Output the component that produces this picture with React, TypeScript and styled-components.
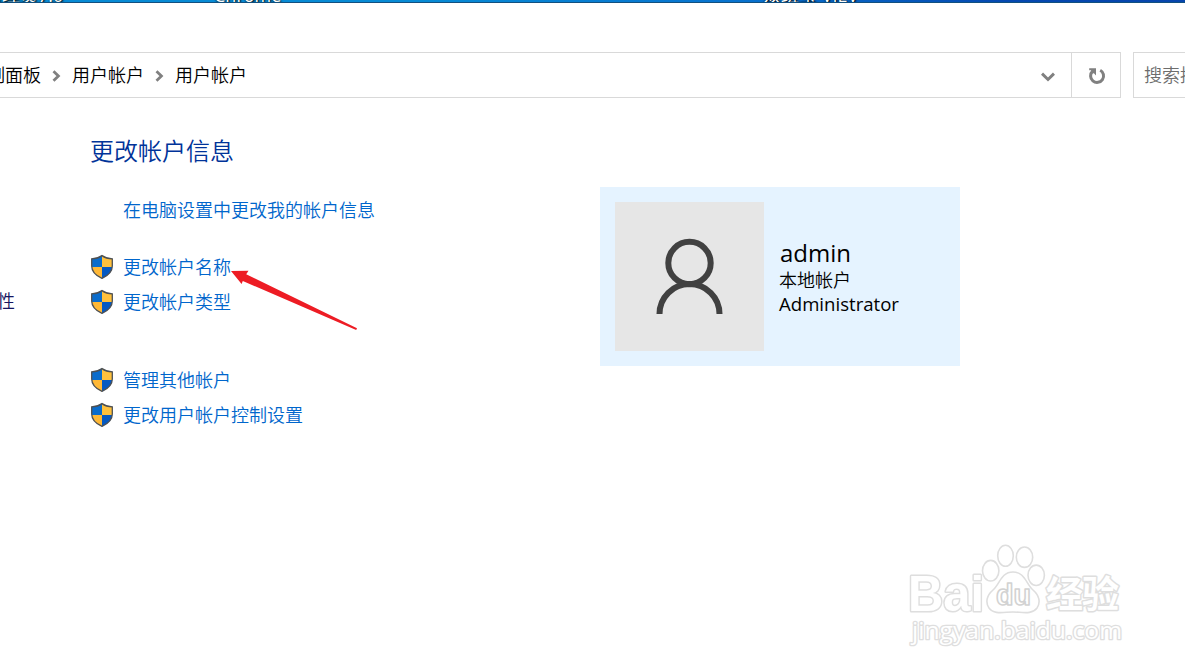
import React from 'react';
import styled, { createGlobalStyle } from 'styled-components';

interface Task {
  label: string;
  shield?: boolean;
}

const crumbs = ['控制面板', '用户帐户', '用户帐户'];

const accountTasks: Task[] = [
  { label: '更改帐户名称', shield: true },
  { label: '更改帐户类型', shield: true }
];

const adminTasks: Task[] = [
  { label: '管理其他帐户', shield: true },
  { label: '更改用户帐户控制设置', shield: true }
];

const ShieldIcon: React.FC = () => (
  <svg width="24" height="26" viewBox="0 0 24 26">
    <defs>
      <clipPath id="shield">
        <path d="M12 1.6C9.2 3.6 5.4 4.7 1.7 4.8v7.1c0 5.6 4.3 9.7 10.3 12.4 6-2.7 10.3-6.8 10.3-12.4V4.8C18.6 4.7 14.8 3.6 12 1.6z" />
      </clipPath>
    </defs>
    <g clipPath="url(#shield)">
      <path d="M0 0h12v13H0z" fill="#0a6ccc" />
      <path d="M12 0h12v13H12z" fill="#ffc13d" />
      <path d="M0 13h12v13H0z" fill="#ffb836" />
      <path d="M12 13h12v13H12z" fill="#0559c2" />
    </g>
    <path
      d="M12 1.6C9.2 3.6 5.4 4.7 1.7 4.8v7.1c0 5.6 4.3 9.7 10.3 12.4 6-2.7 10.3-6.8 10.3-12.4V4.8C18.6 4.7 14.8 3.6 12 1.6z"
      fill="none"
      stroke="#4d5053"
      strokeWidth="1.3"
    />
  </svg>
);

const CrumbChevron: React.FC = () => (
  <svg width="9" height="12" viewBox="0 0 9 12">
    <path d="M1.5 1.3L6.4 6l-4.9 4.7" fill="none" stroke="#808080" strokeWidth="2.8" />
  </svg>
);

const DropChevron: React.FC = () => (
  <svg width="14" height="10" viewBox="0 0 14 10">
    <path d="M1 1.7l6 5.8 6-5.8" fill="none" stroke="#808080" strokeWidth="3" />
  </svg>
);

const RefreshIcon: React.FC = () => (
  <svg width="18" height="18" viewBox="0 0 18 18">
    <path d="M12.2 3.2A6.5 6.5 0 1 1 4.6 4.2" fill="none" stroke="#808080" strokeWidth="3" />
    <path d="M1.2 1.2H8v7.2L5.9 6.2 4 6.6 3 3.2H1.2z" fill="#808080" />
  </svg>
);

const UserIcon: React.FC = () => (
  <svg width="149" height="149" viewBox="0 0 149 149" fill="none" stroke="#414141" strokeWidth="6">
    <circle cx="74.5" cy="61" r="21.2" />
    <path d="M44.5 112a30 30 0 0 1 60 0" />
  </svg>
);

const WatermarkLogo: React.FC = () => (
  <svg width="230" height="114" viewBox="0 0 230 114">
    <g fill="#fff" stroke="#dedede" strokeWidth="1.6" strokeLinejoin="round">
      <text
        x="7"
        y="71"
        fontSize="50"
        fontWeight="bold"
        fontFamily="'Liberation Sans', Arial, sans-serif"
        textLength="76"
        lengthAdjust="spacingAndGlyphs"
        strokeWidth="3"
        paintOrder="stroke"
      >
        Bai
      </text>
      <ellipse cx="89.7" cy="30.7" rx="8.2" ry="10.3" />
      <ellipse cx="104.5" cy="15.8" rx="7.8" ry="10.5" />
      <ellipse cx="123.5" cy="17.2" rx="8.2" ry="10.2" />
      <ellipse cx="135.2" cy="35.3" rx="8.2" ry="10.2" />
      <path d="M112 32c-12 0-13 12-20 18-6 5-8 12-4 18 5 7 15 4 24 4s19 3 24-4c4-6 2-13-4-18-7-6-8-18-20-18z" />
      <text
        x="95"
        y="65"
        fontSize="29"
        fontWeight="bold"
        fontFamily="'Liberation Sans', Arial, sans-serif"
        textLength="35"
        lengthAdjust="spacingAndGlyphs"
        stroke="#d2d2d2"
      >
        du
      </text>
      <text
        x="145"
        y="68"
        fontSize="37"
        fontWeight="bold"
        fontFamily="'Noto Sans CJK SC', sans-serif"
        textLength="73"
        strokeWidth="3"
        paintOrder="stroke"
      >
        经验
      </text>
      <text
        x="11"
        y="99"
        fontSize="23"
        fontFamily="'Open Sans', sans-serif"
        fontWeight="500"
        textLength="210"
        lengthAdjust="spacingAndGlyphs"
        strokeWidth="2.6"
        paintOrder="stroke"
      >
        jingyan.baidu.com
      </text>
    </g>
  </svg>
);

const TaskList: React.FC<{ tasks: Task[] }> = ({ tasks }) => (
  <Tasks>
    {tasks.map((task) => (
      <TaskRow key={task.label}>
        <IconSlot>{task.shield && <ShieldIcon />}</IconSlot>
        <TaskLink>{task.label}</TaskLink>
      </TaskRow>
    ))}
  </Tasks>
);

const App: React.FC = () => (
  <Screen>
    <GlobalStyle />
    <DesktopStrip>
      <DesktopLabel indent={-16}>管理员7.0</DesktopLabel>
      <DesktopLabel indent={214}>Chrome</DesktopLabel>
      <DesktopLabel indent={763}>双班宝 VIEV</DesktopLabel>
    </DesktopStrip>

    <NavigationBar>
      <AddressBar>
        <Breadcrumbs>
          {crumbs.map((crumb, i) => (
            <React.Fragment key={i}>
              {i > 0 && <CrumbChevron />}
              <span>{crumb}</span>
            </React.Fragment>
          ))}
        </Breadcrumbs>
        <DropButton>
          <DropChevron />
        </DropButton>
        <RefreshButton>
          <RefreshIcon />
        </RefreshButton>
      </AddressBar>
      <SearchBox>搜索控制面板</SearchBox>
    </NavigationBar>

    <Content>
      <Sidebar>
        <span>属性</span>
      </Sidebar>
      <TaskPane>
        <Heading>更改帐户信息</Heading>
        <SettingsLink>在电脑设置中更改我的帐户信息</SettingsLink>
        <TaskList tasks={accountTasks} />
        <TaskList tasks={adminTasks} />
      </TaskPane>
      <AccountCard>
        <Avatar>
          <UserIcon />
        </Avatar>
        <AccountInfo>
          <AccountName>admin</AccountName>
          <AccountKind>本地帐户</AccountKind>
          <AccountRole>Administrator</AccountRole>
        </AccountInfo>
      </AccountCard>
    </Content>

    <Pointer width="130" height="64" viewBox="0 0 130 64">
      <path d="M1 3L18.5 2.8 16.2 6.2 127 60.2 126.2 62 12.8 13 11.6 16z" fill="#ed1c24" />
    </Pointer>
    <Watermark>
      <WatermarkLogo />
    </Watermark>
  </Screen>
);

export default App;

const GlobalStyle = createGlobalStyle`
  body {
    margin: 0;
    background: #fff;
    overflow: hidden;
  }
`;

const Screen = styled.div`
  position: relative;
  width: 1185px;
  height: 672px;
  overflow: hidden;
  background: #fff;
  color: #000;
  font-family: 'Noto Sans CJK SC', sans-serif;
  font-size: 18px;
  font-weight: 350;
  line-height: 24px;
  white-space: nowrap;
`;

const DesktopStrip = styled.div`
  position: relative;
  box-sizing: border-box;
  height: 3px;
  overflow: hidden;
  background: linear-gradient(90deg, #078bd5 0%, #078bd5 35%, #0873cf 62%, #0448b0 85%, #0645ac 100%);
  border-bottom: 1px solid #12507f;
`;

const DesktopLabel = styled.span<{ indent: number }>`
  position: absolute;
  left: ${(props) => props.indent}px;
  bottom: -5px;
  color: #fff;
  font-family: 'Open Sans', 'Noto Sans CJK SC', sans-serif;
  font-size: 18px;
  font-weight: 400;
  text-shadow: 1px 1px 2px #000, 0 0 2px #000;
`;

const NavigationBar = styled.div`
  display: flex;
  gap: 12px;
  margin-top: 49px;
`;

const AddressBar = styled.div`
  box-sizing: border-box;
  display: flex;
  flex: none;
  width: 1121px;
  height: 46px;
  border: 1px solid #d9d9d9;
  border-left: 0;
`;

const Breadcrumbs = styled.div`
  display: flex;
  flex: 1;
  align-items: center;
  gap: 11px;
  margin-left: -31px;
  padding-bottom: 3px;

  svg {
    margin-top: 4px;
  }
`;

const DropButton = styled.div`
  display: flex;
  align-items: center;
  justify-content: center;
  width: 46px;
  padding-top: 3px;
`;

const RefreshButton = styled.div`
  box-sizing: border-box;
  display: flex;
  align-items: center;
  justify-content: center;
  width: 49px;
  padding: 1px 0 0 2px;
  border-left: 1px solid #d9d9d9;
`;

const SearchBox = styled.div`
  box-sizing: border-box;
  flex: none;
  width: 240px;
  height: 46px;
  padding: 9px 10px;
  border: 1px solid #d9d9d9;
  color: #6d6d6d;
`;

const Content = styled.div`
  display: flex;
  align-items: flex-start;
`;

const Sidebar = styled.div`
  display: flex;
  justify-content: flex-end;
  width: 15px;
  margin-right: 75px;
  padding-top: 190px;
  color: #151560;
`;

const TaskPane = styled.div`
  width: 510px;
  padding-top: 36px;
`;

const Heading = styled.div`
  color: #003399;
  font-size: 24px;
  line-height: 32px;
`;

const TaskLink = styled.span`
  color: #0066cc;
`;

const SettingsLink = styled(TaskLink)`
  display: block;
  margin: 31px 0 33px 33px;
`;

const Tasks = styled.div`
  display: flex;
  flex-direction: column;
  gap: 9px;

  & + & {
    margin-top: 52px;
  }
`;

const TaskRow = styled.div`
  display: flex;
  align-items: flex-start;
  height: 26px;
`;

const IconSlot = styled.div`
  width: 33px;
  height: 26px;
`;

const AccountCard = styled.div`
  box-sizing: border-box;
  display: flex;
  gap: 15px;
  width: 360px;
  height: 179px;
  margin-top: 89px;
  padding: 15px;
  background: #e5f3ff;
`;

const Avatar = styled.div`
  width: 149px;
  height: 149px;
  background: #e6e6e6;
`;

const AccountInfo = styled.div`
  padding-top: 35px;
`;

const AccountName = styled.div`
  padding-left: 1px;
  font-family: 'Open Sans', sans-serif;
  font-size: 24px;
  font-weight: 400;
  line-height: 31px;
`;

const AccountKind = styled.div`
  line-height: 22px;
`;

const AccountRole = styled.div`
  font-family: 'Open Sans', sans-serif;
  font-size: 18.6px;
  font-weight: 400;
  line-height: 28px;
`;

const Pointer = styled.svg`
  position: absolute;
  left: 230px;
  top: 268px;
`;

const Watermark = styled.div`
  position: absolute;
  left: 901px;
  top: 540px;
`;
